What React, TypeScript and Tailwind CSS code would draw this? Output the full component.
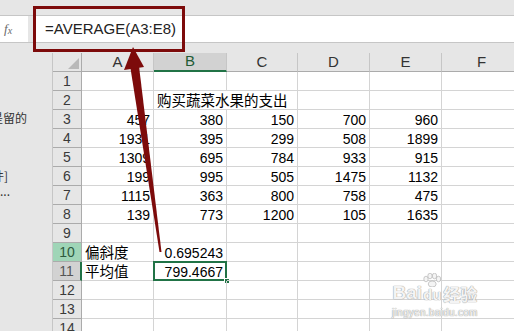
import React from "react";

const cols = [
  { key: "A", w: "w-[72px]" },
  { key: "B", w: "w-[73px]" },
  { key: "C", w: "w-[71px]" },
  { key: "D", w: "w-[72px]" },
  { key: "E", w: "w-[72px]" },
  { key: "F", w: "w-[80px]" },
];

type Row = (string | number | null)[];

const rows: Row[] = [
  [],
  [null, "购买蔬菜水果的支出"],
  [457, 380, 150, 700, 960],
  [1931, 395, 299, 508, 1899],
  [1309, 695, 784, 933, 915],
  [199, 995, 505, 1475, 1132],
  [1115, 363, 800, 758, 475],
  [139, 773, 1200, 105, 1635],
  [],
  ["偏斜度", "0.695243"],
  ["平均值", "799.4667"],
  [],
  [],
  [],
];

function isNum(v: string | number | null) {
  return typeof v === "number" || (typeof v === "string" && /^[\d.]+$/.test(v));
}

function RowHeader({ n }: { n: number }) {
  if (n === 10)
    return (
      <div className="w-[29px] shrink-0 h-full flex items-center justify-center bg-[#9fd5b7] border-r border-b border-[#ababab] text-[#2d5a3e]">
        {n}
      </div>
    );
  if (n === 11)
    return (
      <div className="w-[29px] shrink-0 h-full flex items-center justify-center bg-[#d2d2d2] border-r-2 border-r-[#217346] border-b border-b-[#ababab] text-[#555]">
        {n}
      </div>
    );
  return (
    <div className="w-[29px] shrink-0 h-full flex items-center justify-center bg-[#e6e6e6] border-r border-b border-[#ababab] text-[#3a3a3a]">
      {n}
    </div>
  );
}

export default function App() {
  return (
    <div className="relative w-[514px] h-[331px] overflow-hidden bg-[#e6e6e6] font-['Liberation_Sans','Noto_Sans_CJK_SC',sans-serif] text-[14px] text-black">
      {/* ribbon edge */}
      <div className="h-[16px] border-b border-[#c6c6c6]" />

      {/* formula bar */}
      <div className="h-[27px] flex border-b border-[#c6c6c6]">
        <div className="w-[28px] shrink-0 bg-white flex items-center pl-[4px] font-['Liberation_Serif',serif] italic text-[#6a6a6a] text-[13px]">
          f<span className="text-[10px] mt-[3px]">x</span>
        </div>
        <div className="w-[6px] shrink-0" />
        <div className="flex-1 bg-white flex items-center pl-[11px] text-[15px] text-[#222]">
          =AVERAGE(A3:E8)
        </div>
      </div>

      <div className="h-[10px]" />

      {/* body */}
      <div className="flex">
        <div className="w-[53px] shrink-0 border-r border-[#c6c6c6] h-[300px] overflow-hidden text-[12px] text-[#333] font-['Noto_Sans_CJK_SC',sans-serif]">
          <div className="mt-[56px] ml-[-9px] whitespace-nowrap">是留的</div>
          <div className="mt-[40px] ml-[-8px] whitespace-nowrap">件]</div>
          <div className="mt-[1px] whitespace-nowrap leading-[10px]">...</div>
        </div>

        <div className="shrink-0 bg-white">
          {/* column headers */}
          <div className="flex h-[19px]">
            <div className="w-[29px] shrink-0 h-full bg-[#e6e6e6] border-r border-b border-[#ababab] relative">
              <div className="absolute right-[2px] bottom-[2px] w-0 h-0 border-l-[11px] border-l-transparent border-b-[11px] border-b-[#b9b9b9]" />
            </div>
            {cols.map((c) =>
              c.key === "B" ? (
                <div
                  key={c.key}
                  className={`${c.w} shrink-0 h-full flex items-center justify-center bg-[#d2d2d2] border-r border-[#c6c6c6] border-b-2 border-b-[#217346] text-[#1f5c36] text-[15px]`}
                >
                  {c.key}
                </div>
              ) : (
                <div
                  key={c.key}
                  className={`${c.w} shrink-0 h-full flex items-center justify-center bg-[#e6e6e6] border-r border-[#c6c6c6] border-b border-b-[#ababab] text-[#333] text-[15px]`}
                >
                  {c.key}
                </div>
              )
            )}
          </div>

          {rows.map((r, i) => {
            const n = i + 1;
            return (
              <div key={n} className="flex h-[19px]">
                <RowHeader n={n} />
                {cols.map((c, j) => {
                  const v = r[j] ?? null;
                  const noRight = n === 2 && j === 1;
                  const selected = n === 11 && j === 1;
                  return (
                    <div
                      key={c.key}
                      className={`${c.w} shrink-0 h-full relative flex items-center border-b border-[#d4d4d4] ${
                        noRight ? "" : "border-r"
                      } ${isNum(v) ? "justify-end pr-[3px]" : "justify-start pl-[3px]"} ${
                        typeof v === "string" && !isNum(v) ? "text-[14.5px]" : ""
                      }`}
                    >
                      {v !== null && <span className="whitespace-nowrap leading-none pt-[2px]">{v}</span>}
                      {selected && (
                        <>
                          <div className="absolute left-[-1px] top-[-1px] right-[-1px] bottom-[-1px] border-2 border-[#217346]" />
                          <div className="absolute right-[-4px] bottom-[-4px] w-[6px] h-[6px] bg-[#217346] border border-white" />
                        </>
                      )}
                    </div>
                  );
                })}
              </div>
            );
          })}
        </div>
      </div>

      {/* annotation: red box */}
      <div className="absolute left-[33px] top-[6px] w-[152px] h-[46px] border-[3.5px] border-[#7d0b0b]" />

      {/* annotation: arrow */}
      <svg className="absolute left-0 top-0" width="514" height="331" viewBox="0 0 514 331">
        <polygon points="129.5,62 138.5,62 161.5,252 159.5,252" fill="#7d0b0b" />
        <polygon points="133,47 124,70 144,67" fill="#7d0b0b" />
      </svg>

      {/* watermark */}
      <div className="absolute left-[392px] top-[273px] flex flex-col items-center text-[#f4f4f4] [text-shadow:0_0_1px_#9a9a9a,0_0_1px_#9a9a9a]">
        <div className="flex items-end">
          <span className="text-[19px] font-bold leading-none">Bai</span>
          <span className="flex flex-col items-center">
            <svg width="20" height="14" viewBox="0 0 20 14">
              <g fill="#f4f4f4" stroke="#aaa" strokeWidth="0.6">
                <ellipse cx="4" cy="6" rx="2.2" ry="2.8" />
                <ellipse cx="8" cy="3" rx="2.2" ry="2.8" />
                <ellipse cx="12.5" cy="3" rx="2.2" ry="2.8" />
                <ellipse cx="16.5" cy="6" rx="2.2" ry="2.8" />
                <ellipse cx="10.2" cy="11" rx="4" ry="3" />
              </g>
            </svg>
            <span className="text-[15px] font-bold leading-none">du</span>
          </span>
          <span className="text-[17px] font-bold leading-none ml-[1px] font-['Noto_Sans_CJK_SC',sans-serif]">经验</span>
        </div>
        <span className="text-[10px] leading-none mt-[6px] tracking-[0.3px]">jingyen.baidu.com</span>
      </div>
    </div>
  );
}
